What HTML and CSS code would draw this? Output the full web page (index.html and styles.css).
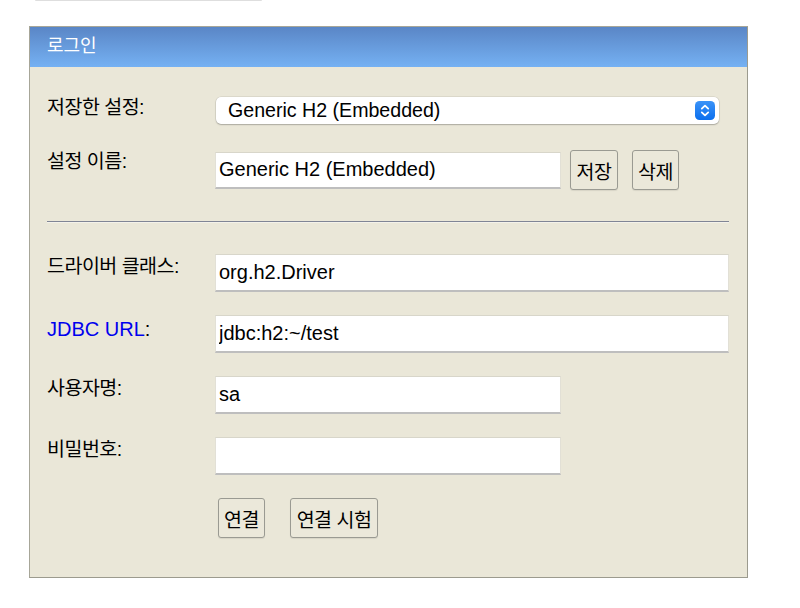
FILE: index.html
```html
<!DOCTYPE html>
<html>
<head>
  <meta charset="utf-8">
  <!-- Style for the login panel -->
  <link rel="stylesheet" href="styles.css">
</head>

<body>

  <!-- Bottom edge of the toolbar above the panel -->
  <div class="tab-edge"></div>

  <!-- Login panel -->
  <div class="login">
    <div class="login-title">로그인</div>

    <div class="login-body">
      <!-- Saved settings -->
      <div class="row row-select">
        <label class="label">저장한 설정:</label>
        <div class="select">
          <span class="select-text">Generic H2 (Embedded)</span>
          <svg class="select-icon" width="20" height="19" viewBox="0 0 20 19">
            <defs>
              <linearGradient id="stepper" x1="0" y1="0" x2="0" y2="1">
                <stop offset="0" stop-color="#3b93f7"/>
                <stop offset="1" stop-color="#0b6fee"/>
              </linearGradient>
            </defs>
            <rect width="20" height="19" rx="4.5" fill="url(#stepper)"/>
            <path d="M6.8 7.6 L10 4.6 L13.2 7.6 M6.8 11.4 L10 14.4 L13.2 11.4" fill="none" stroke="#fff" stroke-width="1.8" stroke-linecap="round" stroke-linejoin="round"/>
          </svg>
        </div>
      </div>

      <!-- Setting name -->
      <div class="row row-name">
        <label class="label">설정 이름:</label>
        <input class="field field-short" type="text" value="Generic H2 (Embedded)">
        <button class="btn btn-save">저장</button>
        <button class="btn btn-delete">삭제</button>
      </div>

      <hr class="divider">

      <!-- Connection settings -->
      <div class="row">
        <label class="label">드라이버 클래스:</label>
        <input class="field field-long" type="text" value="org.h2.Driver">
      </div>
      <div class="row">
        <label class="label label-latin"><a class="help-link" href="#">JDBC URL</a>:</label>
        <input class="field field-long" type="text" value="jdbc:h2:~/test">
      </div>
      <div class="row">
        <label class="label">사용자명:</label>
        <input class="field field-short" type="text" value="sa">
      </div>
      <div class="row">
        <label class="label">비밀번호:</label>
        <input class="field field-short" type="password" value="">
      </div>

      <!-- Connect buttons -->
      <div class="row row-actions">
        <span class="label"></span>
        <button class="btn btn-connect">연결</button>
        <button class="btn btn-test">연결 시험</button>
      </div>
    </div>
  </div>

</body>
</html>
```

FILE: styles.css
```css
/* Page */
body {
  margin: 0;
  background: #fff;
  font-family: "Liberation Sans", "Noto Sans CJK KR", sans-serif;
  color: #000;
}

/* Faint edge of the toolbar cut off at the top */
.tab-edge {
  margin-left: 35px;
  width: 227px;
  height: 1px;
  background: #dedede;
  border-radius: 0 0 6px 6px;
}

/* The login panel */
.login {
  margin: 25px 0 0 29px;
  width: 717px;
  border: 1px solid #a7a698;
  border-right-color: #9c9b8e;
  border-bottom-color: #9c9b8e;
  background: #eae7d8;
}

.login-title {
  height: 40px;
  line-height: 39px;
  padding-left: 17px;
  font-size: 18px;
  color: #fff;
  background: linear-gradient(#5a86c6, #75b1f3);
}

.login-body {
  padding: 30px 18px 39px 17px;
}

/* One label + control line */
.row {
  display: flex;
  align-items: flex-start;
  margin-top: 23px;
}

.row-select {
  margin-top: 0;
  align-items: center;
}

.row-name {
  margin-top: 26px;
  align-items: center;
}

.label {
  flex: none;
  width: 168px;
  font-size: 19.5px;
  line-height: 24px;
  letter-spacing: -0.5px;
  align-self: flex-start;
}

.row-select .label {
  margin-top: -2px;
}

.row-name .label {
  margin-top: -1px;
}

.label-latin {
  font-size: 20px;
  letter-spacing: 0;
  padding-top: 2px;
}

.help-link {
  color: #0000ee;
  text-decoration: none;
}

/* Select box with the blue stepper */
.select {
  display: flex;
  align-items: center;
  justify-content: space-between;
  width: 503px;
  height: 27px;
  margin-left: 1px;
  padding: 0 4px 0 12px;
  box-sizing: border-box;
  background: #fff;
  border-radius: 5px;
  box-shadow: 0 0 0 0.5px rgba(0, 0, 0, 0.12), 0 1px 1.5px rgba(0, 0, 0, 0.22);
}

.select-text {
  font-size: 19.6px;
}

.select-icon {
  display: block;
}

/* Text inputs */
.field {
  height: 38px;
  box-sizing: border-box;
  margin: 0;
  padding: 0 3px;
  font-family: "Liberation Sans", sans-serif;
  font-size: 20px;
  color: #000;
  background: #fff;
  border: 1px solid #e2e0d6;
  border-top-color: #d8d6ca;
  border-bottom: 2px solid #bebebe;
  border-radius: 0;
  outline: none;
}

.row-name .field {
  height: 37px;
}

.field-long {
  width: 515px;
}

.field-short {
  width: 346px;
}

/* Buttons */
.btn {
  height: 40px;
  box-sizing: border-box;
  padding: 0 5px;
  font-family: "Liberation Sans", "Noto Sans CJK KR", sans-serif;
  font-size: 19.5px;
  letter-spacing: -0.5px;
  color: #000;
  background: #ebe8da;
  border: 1px solid #9a9a92;
  border-radius: 3px;
  box-shadow: 0 1px 1px rgba(0, 0, 0, 0.08);
}

.btn-save {
  width: 48px;
  margin-left: 9px;
}

.btn-delete {
  width: 47px;
  margin-left: 14px;
}

.btn-connect {
  width: 47px;
  margin-left: 3px;
}

.btn-test {
  width: 88px;
  margin-left: 25px;
}

/* Separator line */
.divider {
  margin: 31px 0 31px 0;
  height: 0;
  border: 0;
  border-top: 1px solid #808595;
  border-bottom: 1px solid #f4f2ea;
}
```
